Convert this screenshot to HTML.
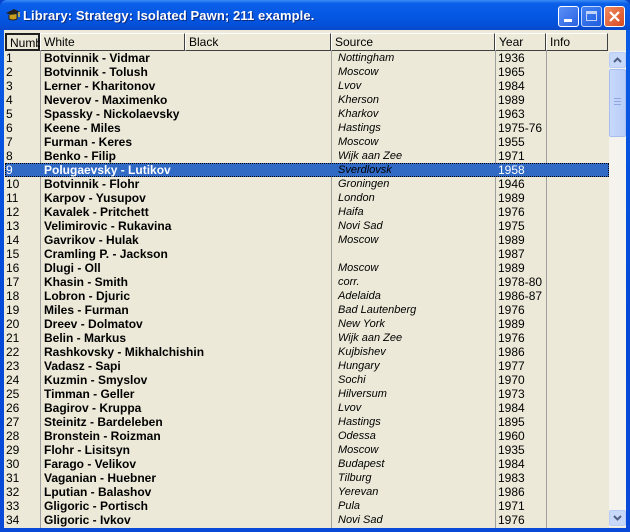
<!DOCTYPE html>
<html><head><meta charset="utf-8"><style>
*{margin:0;padding:0;box-sizing:border-box}
body{width:630px;height:532px;overflow:hidden;background:#0842c8;font-family:Tahoma,"DejaVu Sans","Liberation Sans",sans-serif;font-size:11px}
#win{position:absolute;left:0;top:0;width:630px;height:532px;background:linear-gradient(#0a5ee8,#0348d8 60%,#0a4ad8);border-radius:7px 7px 0 0}
#title{position:absolute;left:0;top:0;width:630px;height:30px;border-radius:7px 7px 0 0;background:linear-gradient(#3b8cf5 0%,#0a5fe8 12%,#0558e4 50%,#0450d8 85%,#0a48c8 100%)}
#title .t{position:absolute;left:23px;top:8px;color:#fff;font-weight:bold;font-size:13px;font-family:"Liberation Sans",sans-serif;text-shadow:1px 1px #0a2a80;letter-spacing:0.1px}
.btn{position:absolute;top:6px;width:21px;height:21px;border:1px solid #fff;border-radius:3px;background:linear-gradient(135deg,#5a90f8,#2a62e0)}
#client{position:absolute;left:4px;top:30px;width:622px;height:498px;background:#ece9d8}
#hdr{position:absolute;left:1px;top:3px;height:18px;width:603px}
.h{position:absolute;top:0;height:18px;background:#ece9d8;border-right:1px solid #404040;border-bottom:1px solid #404040;border-top:1px solid #fff;border-left:1px solid #fff;padding-left:3px;font-size:12px;line-height:16px;color:#000;font-family:"Liberation Sans",sans-serif}
.row{position:absolute;left:1px;width:604px;height:14px;line-height:14px;font-size:12px;font-family:"Liberation Sans",sans-serif}
.row span{position:absolute;top:0;white-space:nowrap}
.n{left:1px}
.w{left:39px;font-weight:bold}
.s{left:333px;font-style:italic;font-size:11px;color:#000}
.y{left:493px}
.sel{background:#316ac5;color:#fff;outline:1px dotted #000;outline-offset:-1px}
.vl{position:absolute;top:21px;width:1px;height:477px;background:#a0a0a0}
#sb{position:absolute;left:605px;top:21px;width:17px;height:476px;background:#f4f3ee}
</style></head><body>
<div id="win">
<div id="title">
<svg style="position:absolute;left:5px;top:7px" width="16" height="16" viewBox="0 0 16 16"><path d="M1 6 L9 2 L15 5 L8 9Z" fill="#222"/><path d="M4 8 L4 12 Q8 14 12 12 L12 7" fill="#c8a020" stroke="#222"/><path d="M14 5 L14 10" stroke="#e8c030" stroke-width="1.5"/></svg>
<div class="t">Library: Strategy: Isolated Pawn; 211 example.</div>
<div class="btn" style="left:558px"><div style="position:absolute;left:5px;top:12px;width:8px;height:3px;background:#fff"></div></div>
<div class="btn" style="left:581px;opacity:.75"><div style="position:absolute;left:4px;top:4px;width:11px;height:10px;border:1px solid #fff;border-top-width:3px"></div></div>
<div class="btn" style="left:604px;background:linear-gradient(135deg,#f08a60,#d84a20)"><svg width="19" height="19" viewBox="0 0 19 19"><path d="M5 5L14 14M14 5L5 14" stroke="#fff" stroke-width="2.2"/></svg></div>
</div>
<div id="client">
<div id="hdr">
<div class="h" style="left:0;width:35px;border:2px solid #202020">Numb</div>
<div class="h" style="left:35px;width:145px">White</div>
<div class="h" style="left:180px;width:146px">Black</div>
<div class="h" style="left:326px;width:164px">Source</div>
<div class="h" style="left:490px;width:51px">Year</div>
<div class="h" style="left:541px;width:62px">Info</div>
</div>
<div class="vl" style="left:36px"></div>
<div class="vl" style="left:327px"></div>
<div class="vl" style="left:491px"></div>
<div class="vl" style="left:542px"></div>
<div id="rows"></div>
<div id="sb">
<div style="position:absolute;left:0;top:1px;width:17px;height:16px;border:1px solid #b8cdf5;border-radius:2px;background:#c8d8f8"><svg width="15" height="14"><path d="M4 9L7.5 5.5L11 9" stroke="#4d6185" stroke-width="2" fill="none"/></svg></div>
<div style="position:absolute;left:0;top:18px;width:17px;height:68px;border:1px solid #a8bef0;border-radius:2px;background:linear-gradient(90deg,#c8d8fb,#b8cdf8)"><div style="position:absolute;left:4px;top:28px;width:7px;height:7px;border-top:1px solid #8fa8e0;border-bottom:1px solid #8fa8e0"><div style="margin-top:2px;height:1px;background:#8fa8e0"></div></div></div>
<div style="position:absolute;left:0;top:459px;width:17px;height:16px;border:1px solid #b8cdf5;border-radius:2px;background:#c8d8f8"><svg width="15" height="14"><path d="M4 5L7.5 8.5L11 5" stroke="#4d6185" stroke-width="2" fill="none"/></svg></div>
</div>
</div>
</div>
<script>
var d=[["Botvinnik - Vidmar","Nottingham","1936"],["Botvinnik - Tolush","Moscow","1965"],["Lerner - Kharitonov","Lvov","1984"],["Neverov - Maximenko","Kherson","1989"],["Spassky - Nickolaevsky","Kharkov","1963"],["Keene - Miles","Hastings","1975-76"],["Furman - Keres","Moscow","1955"],["Benko - Filip","Wijk aan Zee","1971"],["Polugaevsky - Lutikov","Sverdlovsk","1958"],["Botvinnik - Flohr","Groningen","1946"],["Karpov - Yusupov","London","1989"],["Kavalek - Pritchett","Haifa","1976"],["Velimirovic - Rukavina","Novi Sad","1975"],["Gavrikov - Hulak","Moscow","1989"],["Cramling P. - Jackson","","1987"],["Dlugi - Oll","Moscow","1989"],["Khasin - Smith","corr.","1978-80"],["Lobron - Djuric","Adelaida","1986-87"],["Miles - Furman","Bad Lautenberg","1976"],["Dreev - Dolmatov","New York","1989"],["Belin - Markus","Wijk aan Zee","1976"],["Rashkovsky - Mikhalchishin","Kujbishev","1986"],["Vadasz - Sapi","Hungary","1977"],["Kuzmin - Smyslov","Sochi","1970"],["Timman - Geller","Hilversum","1973"],["Bagirov - Kruppa","Lvov","1984"],["Steinitz - Bardeleben","Hastings","1895"],["Bronstein - Roizman","Odessa","1960"],["Flohr - Lisitsyn","Moscow","1935"],["Farago - Velikov","Budapest","1984"],["Vaganian - Huebner","Tilburg","1983"],["Lputian - Balashov","Yerevan","1986"],["Gligoric - Portisch","Pula","1971"],["Gligoric - Ivkov","Novi Sad","1976"]];
var h="";d.forEach(function(r,i){h+='<div class="row'+(i==8?' sel':'')+'" style="top:'+(21+i*14)+'px"><span class="n">'+(i+1)+'</span><span class="w">'+r[0]+'</span><span class="s">'+r[1]+'</span><span class="y">'+r[2]+'</span></div>'});
document.getElementById("rows").innerHTML=h;
</script>
</body></html>
